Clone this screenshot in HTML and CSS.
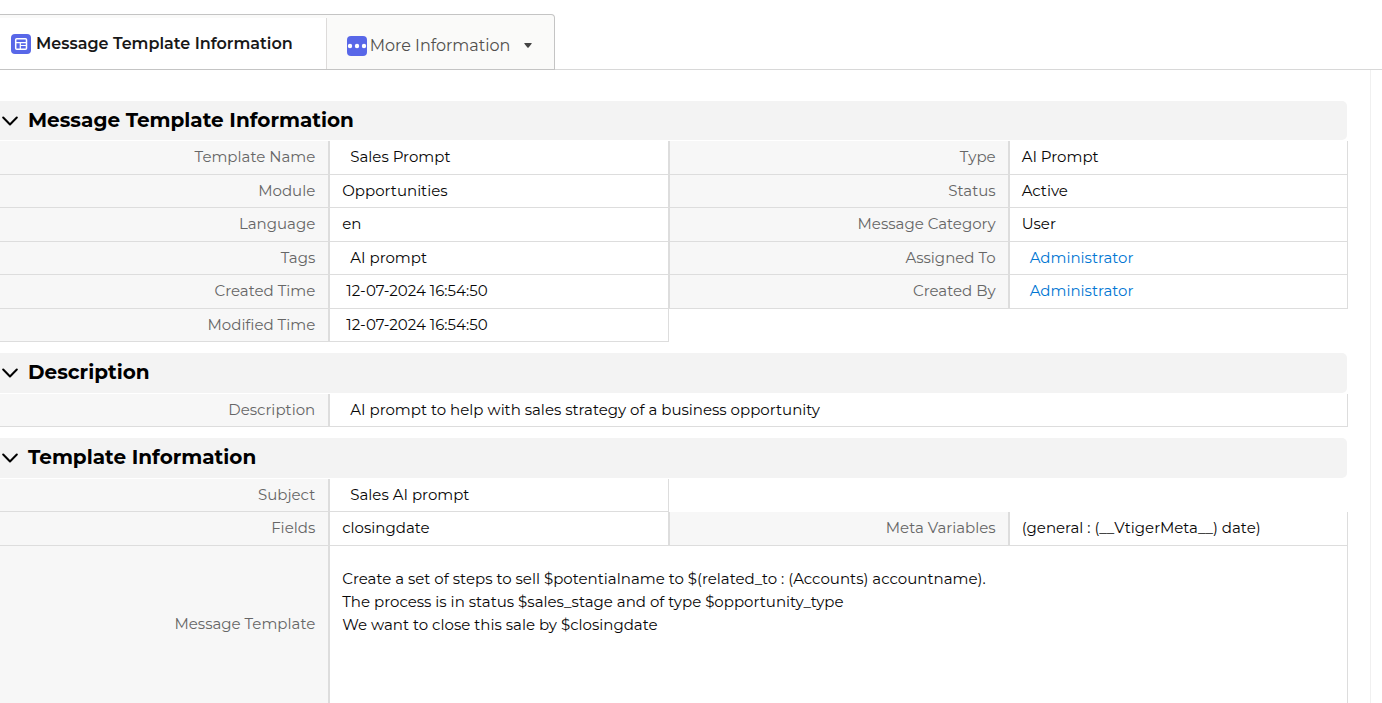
FILE: index.html
```html
<!DOCTYPE html>
<html lang="en">
<head>
<meta charset="utf-8">
<title>Message Template Information</title>
<link rel="stylesheet" href="styles.css">
</head>
<body>
<nav class="tabs">
  <div class="tab-bar">
    <button class="tab tab-active" type="button">
      <svg class="tab-icon" viewBox="0 0 20 20" aria-hidden="true"><rect width="20" height="20" rx="4" fill="#5867e8"/><rect x="4.700" y="4.700" width="10.800" height="10.600" rx="1" fill="none" stroke="#fff" stroke-width="1.500"/><path d="M5 8.600h10.500M9.300 8.600v6.500M9.300 11.500h6" fill="none" stroke="#fff" stroke-width="1.200"/></svg>
      <span>Message Template Information</span>
    </button>
    <button class="tab tab-more" type="button">
      <svg class="tab-icon" viewBox="0 0 20 20" aria-hidden="true"><rect width="20" height="20" rx="4" fill="#5867e8"/><g fill="#fff"><circle cx="3" cy="10" r="2.200"/><circle cx="10" cy="10" r="2.200"/><circle cx="17" cy="10" r="2.200"/></g></svg>
      <span>More Information</span>
      <svg class="caret" viewBox="0 0 8 5" aria-hidden="true"><path d="M.8 0h6.400q.8 0 .4.7L4.600 4.500q-.6.7-1.200 0L.4.7Q0 0 .8 0z" fill="#444"/></svg>
    </button>
  </div>
</nav>
<main class="panel">
  <section>
    <h2 class="section-title"><button type="button" class="toggle"><svg class="chevron" viewBox="0 0 16 10" aria-hidden="true"><path d="M1.200 1.500 8 8.500l6.800-7"/></svg>Message Template Information</button></h2>
    <table class="details">
      <colgroup><col class="col-label"><col class="col-value"><col class="col-label-2"><col></colgroup>
      <tr><th>Template Name</th><td><span class="inset">Sales Prompt</span></td><th>Type</th><td>AI Prompt</td></tr>
      <tr><th>Module</th><td>Opportunities</td><th>Status</th><td>Active</td></tr>
      <tr><th>Language</th><td>en</td><th>Message Category</th><td>User</td></tr>
      <tr><th>Tags</th><td><span class="inset">AI prompt</span></td><th>Assigned To</th><td><a class="inset" href="#">Administrator</a></td></tr>
      <tr><th>Created Time</th><td><span class="inset-small">12-07-2024 16:54:50</span></td><th>Created By</th><td><a class="inset" href="#">Administrator</a></td></tr>
      <tr><th>Modified Time</th><td><span class="inset-small">12-07-2024 16:54:50</span></td></tr>
    </table>
  </section>
  <section class="section-compact">
    <h2 class="section-title"><button type="button" class="toggle"><svg class="chevron" viewBox="0 0 16 10" aria-hidden="true"><path d="M1.200 1.500 8 8.500l6.800-7"/></svg>Description</button></h2>
    <table class="details">
      <colgroup><col class="col-label"><col class="col-value"><col class="col-label-2"><col></colgroup>
      <tr><th>Description</th><td colspan="3"><span class="inset">AI prompt to help with sales strategy of a business opportunity</span></td></tr>
    </table>
  </section>
  <section class="section-compact">
    <h2 class="section-title"><button type="button" class="toggle"><svg class="chevron" viewBox="0 0 16 10" aria-hidden="true"><path d="M1.200 1.500 8 8.500l6.800-7"/></svg>Template Information</button></h2>
    <table class="details">
      <colgroup><col class="col-label"><col class="col-value"><col class="col-label-2"><col></colgroup>
      <tr><th>Subject</th><td><span class="inset">Sales AI prompt</span></td></tr>
      <tr><th>Fields</th><td>closingdate</td><th>Meta Variables</th><td>(general : (__VtigerMeta__) date)</td></tr>
      <tr class="row-message"><th>Message Template</th><td colspan="3">Create a set of steps to sell $potentialname to $(related_to : (Accounts) accountname).<br>The process is in status $sales_stage and of type $opportunity_type<br>We want to close this sale by $closingdate</td></tr>
    </table>
  </section>
</main>
</body>
</html>
```
FILE: styles.css
```css
* { box-sizing: border-box; }
body {
  margin: 0;
  height: 100vh;
  overflow: hidden;
  display: flex;
  flex-direction: column;
  background: #fff;
  color: #080707;
  font-family: Montserrat, Inter, sans-serif;
  font-size: 15px;
  line-height: 22px;
}
button { font: inherit; color: inherit; background: none; border: 0; padding: 0; }
.tabs { display: flex; padding-top: 14px; border-bottom: 1px solid #d8d8d8; }
.tab-bar {
  display: flex;
  margin-bottom: -1px;
  padding-top: 3px;
  background: #fafaf9;
  border: 1px solid #c4c4c4;
  border-left: 0;
  border-radius: 0 4px 0 0;
}
.tab { display: flex; align-items: center; height: 51px; font-size: 16px; white-space: nowrap; }
.tab-active {
  gap: 5px;
  padding: 0 33px 0 11px;
  background: #fff;
  border-right: 1px solid #dddbda;
  color: #181818;
  font-weight: 600;
}
.tab-more { gap: 3px; padding: 4px 22px 0 20px; color: #514f4d; }
.tab-icon { width: 20px; height: 20px; }
.caret { width: 8px; height: 5px; margin-left: 11px; }
.panel {
  flex: 1;
  margin-right: 11px;
  padding: 31px 22px 0 0;
  border-right: 1px solid #f0f0f0;
}
.section-title {
  margin: 0 1px 1px 0;
  padding-left: 2px;
  background: #f3f3f3;
  border-radius: 0 5px 5px 0;
  font-size: 20px;
  font-weight: 700;
  color: #000;
}
.toggle { display: flex; align-items: center; gap: 10px; height: 39px; padding-bottom: 2px; }
.section-compact .toggle { height: 40px; }
.chevron { width: 16px; height: 10px; margin-top: 2px; fill: none; stroke: #000; stroke-width: 2; stroke-linecap: round; stroke-linejoin: round; }
.details {
  width: 100%;
  margin-bottom: 11px;
  table-layout: fixed;
  border-collapse: separate;
  border-spacing: 0;
}
.col-label { width: 24.5%; }
.col-value { width: 25.1%; }
.col-label-2 { width: 25.3%; }
.details tr { height: 34px; }
.details tr:nth-child(even) { height: 33px; }
.section-compact tr { height: 33px; }
.section-compact tr:nth-child(even) { height: 34px; }
th {
  padding: 0 13px 1px;
  background: #f7f7f7;
  border-right: 2px solid #ddd;
  border-bottom: 1px solid #ddd;
  color: #666;
  font-weight: 400;
  text-align: right;
}
td + th { border-left: 1px solid #ddd; padding-right: 12px; }
td { padding: 0 12px 1px; border-right: 1px solid #ddd; border-bottom: 1px solid #ddd; }
.inset { padding-left: 8px; }
.inset-small { padding-left: 4px; }
a { color: #0176d3; text-decoration: none; }
.section-compact .row-message { height: 158px; }
.row-message td { padding-top: 21px; vertical-align: top; line-height: 23px; }
```
